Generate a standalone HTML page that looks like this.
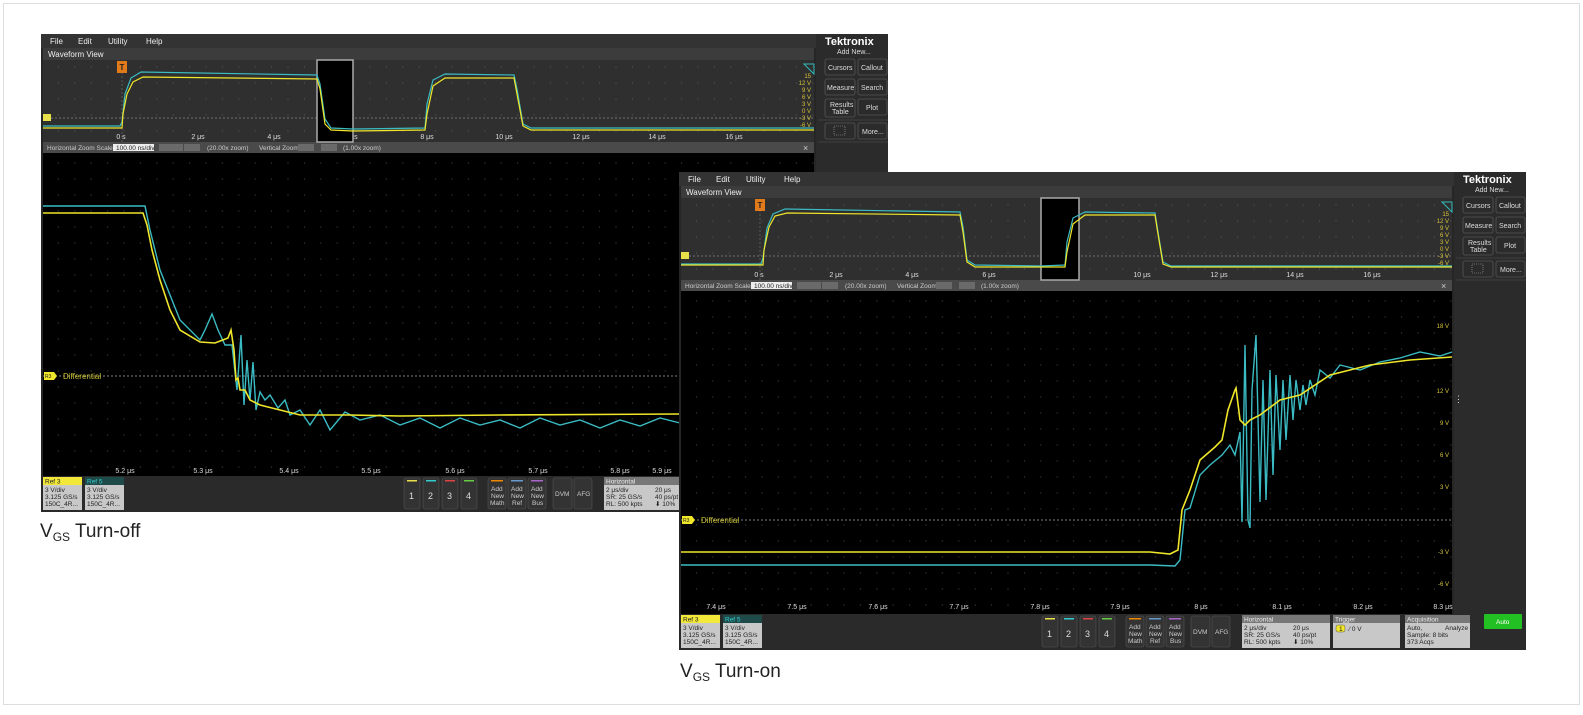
<!DOCTYPE html>
<html><head><meta charset="utf-8"><style>
html,body{margin:0;padding:0;background:#fff;}
svg{display:block;font-family:"Liberation Sans",sans-serif;}
.s{font-size:7px;fill:#ddd}
.m{font-size:8px;fill:#eee}
.y{font-size:6px;fill:#d8c23a}
.w{font-size:6.5px;fill:#ccc}
.b{font-size:6.5px;fill:#222}
</style></head><body>
<svg width="1583" height="715" viewBox="0 0 1583 715" xmlns="http://www.w3.org/2000/svg">
<defs>
<pattern id="gd" width="16.4" height="16" patternUnits="userSpaceOnUse"><circle cx="1" cy="1" r="0.6" fill="#555"/></pattern>
<pattern id="gd2" width="16.4" height="16" patternUnits="userSpaceOnUse"><circle cx="1" cy="1" r="0.6" fill="#444"/></pattern>
<g id="chrome">
  <rect x="0" y="0" width="847" height="478" fill="#262626"/>
  <rect x="0" y="0" width="847" height="14" fill="#333"/>
  <text class="m" x="9" y="10">File</text><text class="m" x="37" y="10">Edit</text><text class="m" x="67" y="10">Utility</text><text class="m" x="105" y="10">Help</text>
  <rect x="2" y="14" width="771" height="12" fill="#3c3c3c"/>
  <text class="m" x="7" y="23">Waveform View</text>
  <rect x="2" y="26" width="771" height="82" fill="#2f2f2f"/>
  <rect x="2" y="26" width="771" height="82" fill="url(#gd)"/>
  <line x1="2" y1="84" x2="773" y2="84" stroke="#888" stroke-width="0.7" stroke-dasharray="2,2"/>
  <line x1="81" y1="34" x2="81" y2="108" stroke="#777" stroke-width="0.6" stroke-dasharray="2,2"/>
  <rect x="76" y="27" width="10" height="12" fill="#e07a1a"/><text x="78.5" y="36" font-size="8" fill="#222" font-weight="bold">T</text>
  <rect x="2" y="80" width="8" height="7" fill="#e8e04a"/>
  <rect x="2" y="108" width="771" height="11" fill="#4a4a4a"/>
  <text class="w" x="6" y="116">Horizontal Zoom Scale</text>
  <rect x="72" y="110" width="41" height="7" fill="#eee"/><text class="b" x="75" y="116">100.00 ns/div</text>
  <rect x="118" y="110" width="24" height="7" fill="#6a6a6a"/><rect x="143" y="110" width="0" height="0"/>
  <rect x="143" y="110" width="16" height="0"/>
  <rect x="143" y="110" width="16" height="7" fill="#6a6a6a" transform="translate(0,0)"/>
  <text class="w" x="166" y="116">(20.00x zoom)</text>
  <text class="w" x="218" y="116">Vertical Zoom</text>
  <rect x="257" y="110" width="16" height="7" fill="#6a6a6a"/><rect x="280" y="110" width="16" height="7" fill="#6a6a6a"/>
  <text class="w" x="302" y="116">(1.00x zoom)</text>
  <text x="762" y="117" font-size="9" fill="#ccc">×</text>
  <rect x="2" y="119" width="771" height="323" fill="#000"/>
  <rect x="2" y="119" width="771" height="323" fill="url(#gd2)"/>
  <rect x="0" y="442" width="775" height="36" fill="#2a2a2a"/>
  <rect x="2" y="443" width="39" height="33" fill="#c8c8c8"/><rect x="2" y="443" width="39" height="8" fill="#f2e83a"/>
  <text class="b" x="4" y="449.5">Ref 3</text><text class="b" x="4" y="458">3 V/div</text><text class="b" x="4" y="465">3.125 GS/s</text><text class="b" x="4" y="472">150C_4R...</text>
  <rect x="44" y="443" width="39" height="33" fill="#c8c8c8"/><rect x="44" y="443" width="39" height="8" fill="#1f4a4a"/>
  <text x="46" y="449.5" font-size="6.5" fill="#3cc">Ref 5</text><text class="b" x="46" y="458">3 V/div</text><text class="b" x="46" y="465">3.125 GS/s</text><text class="b" x="46" y="472">150C_4R...</text>
  <g fill="#333" stroke="#555" stroke-width="0.6">
   <rect x="363" y="444" width="16" height="31" rx="2"/><rect x="382" y="444" width="16" height="31" rx="2"/><rect x="401" y="444" width="16" height="31" rx="2"/><rect x="420" y="444" width="16" height="31" rx="2"/>
   <rect x="447" y="444" width="18" height="31" rx="2"/><rect x="467" y="444" width="18" height="31" rx="2"/><rect x="487" y="444" width="18" height="31" rx="2"/>
   <rect x="512" y="444" width="19" height="31" rx="2"/><rect x="533" y="444" width="18" height="31" rx="2"/>
  </g>
  <rect x="366" y="446" width="10" height="1.5" fill="#e8e04a"/><rect x="385" y="446" width="10" height="1.5" fill="#3cc"/><rect x="404" y="446" width="10" height="1.5" fill="#d44"/><rect x="423" y="446" width="10" height="1.5" fill="#6c4"/>
  <rect x="450" y="446" width="12" height="1.5" fill="#e80"/><rect x="470" y="446" width="12" height="1.5" fill="#69c"/><rect x="490" y="446" width="12" height="1.5" fill="#a6c"/>
  <g font-size="9" fill="#ddd"><text x="368" y="465">1</text><text x="387" y="465">2</text><text x="406" y="465">3</text><text x="425" y="465">4</text></g>
  <g class="w"><text x="450" y="457">Add</text><text x="450" y="464">New</text><text x="449" y="471">Math</text>
  <text x="470" y="457">Add</text><text x="470" y="464">New</text><text x="471" y="471">Ref</text>
  <text x="490" y="457">Add</text><text x="490" y="464">New</text><text x="491" y="471">Bus</text>
  <text x="514" y="462">DVM</text><text x="536" y="462">AFG</text></g>
  <rect x="563" y="443" width="88" height="33" fill="#c8c8c8"/><rect x="563" y="443" width="88" height="8" fill="#777"/>
  <text x="565" y="449.5" font-size="6.5" fill="#eee">Horizontal</text>
  <text class="b" x="565" y="458">2 μs/div</text><text class="b" x="614" y="458">20 μs</text>
  <text class="b" x="565" y="465">SR: 25 GS/s</text><text class="b" x="614" y="465">40 ps/pt</text>
  <text class="b" x="565" y="472">RL: 500 kpts</text><text class="b" x="614" y="472">⬇ 10%</text>
  <rect x="775" y="0" width="72" height="478" fill="#2b2b2b"/>
  <text x="784" y="11" font-size="11" font-weight="bold" fill="#fff">Tektronix</text>
  <text x="796" y="20" font-size="7" fill="#ddd">Add New...</text>
  <g fill="#2b2b2b" stroke="#555" stroke-width="0.8">
   <rect x="784" y="25" width="30" height="16" rx="2"/><rect x="817" y="25" width="29" height="16" rx="2"/>
   <rect x="784" y="45" width="30" height="16" rx="2"/><rect x="817" y="45" width="29" height="16" rx="2"/>
   <rect x="784" y="65" width="30" height="18" rx="2"/><rect x="817" y="65" width="29" height="16" rx="2"/>
   <rect x="784" y="89" width="30" height="16" rx="2"/><rect x="817" y="89" width="29" height="16" rx="2"/>
  </g>
  <line x1="777" y1="86" x2="847" y2="86" stroke="#555" stroke-width="0.6"/><line x1="777" y1="108" x2="847" y2="108" stroke="#555" stroke-width="0.6"/>
  <g font-size="7" fill="#ddd"><text x="787" y="36">Cursors</text><text x="820" y="36">Callout</text>
  <text x="786" y="56">Measure</text><text x="820" y="56">Search</text>
  <text x="789" y="73">Results</text><text x="791" y="80">Table</text><text x="825" y="76">Plot</text>
  <text x="821" y="100">More...</text></g>
  <rect x="793" y="92" width="11" height="9" fill="none" stroke="#aaa" stroke-width="0.6" stroke-dasharray="1,1"/>
  <path d="M763 30 h10 v10 z" fill="none" stroke="#3bb" stroke-width="1"/>
  <g class="y" text-anchor="end"><text x="770" y="44">15</text><text x="770" y="51">12 V</text><text x="770" y="58">9 V</text><text x="770" y="65">6 V</text><text x="770" y="72">3 V</text><text x="770" y="79">0 V</text><text x="770" y="86">-3 V</text><text x="770" y="93">-6 V</text></g>
  <g class="s" font-size="6" text-anchor="middle"><text x="80" y="105">0 s</text><text x="157" y="105">2 μs</text><text x="233" y="105">4 μs</text><text x="310" y="105">6 μs</text><text x="386" y="105">8 μs</text><text x="463" y="105">10 μs</text><text x="540" y="105">12 μs</text><text x="616" y="105">14 μs</text><text x="693" y="105">16 μs</text></g>
</g>
</defs>
<rect x="3.5" y="3.5" width="1576" height="701" fill="#fff" stroke="#ddd"/>

<!-- LEFT SCOPE -->
<g transform="translate(41,34)">
 <use href="#chrome"/>
 <rect x="276" y="26" width="36" height="82" fill="#000" stroke="#aaa" stroke-width="1.5"/>
 <polyline fill="none" stroke="#3bbcc4" stroke-width="1.2" points="2,92 79,92 81,88 84,60 90,44 100,38 276,41 279,50 284,85 290,94 312,95 384,94 386,70 392,46 404,40 473,41 476,55 482,90 490,94 773,94"/>
 <polyline fill="none" stroke="#f0e62a" stroke-width="1.2" points="2,94 81,94 82,80 86,60 92,48 102,43 276,45 279,55 284,90 290,96 312,97 384,96 386,80 392,52 404,44 473,44 476,60 482,92 490,96 773,96"/>
 <g class="s" font-size="6" text-anchor="middle"><text x="84" y="439">5.2 μs</text><text x="162" y="439">5.3 μs</text><text x="248" y="439">5.4 μs</text><text x="330" y="439">5.5 μs</text><text x="414" y="439">5.6 μs</text><text x="497" y="439">5.7 μs</text><text x="579" y="439">5.8 μs</text><text x="621" y="439">5.9 μs</text></g>
 <line x1="2" y1="342" x2="773" y2="342" stroke="#aaa" stroke-width="0.7" stroke-dasharray="2,2"/>
 <path d="M3 338 h10 l3 4 l-3 4 h-10 z" fill="#f0e62a"/><text x="4" y="344" font-size="5" fill="#222">R3</text>
 <text x="22" y="345" font-size="8" fill="#c8c030">Differential</text>
</g>
<polyline fill="none" stroke="#3bbcc4" stroke-width="1.4" points="43,206 145,206 150,230 160,270 180,320 200,340 205,330 212,314 218,330 225,345 232,345 237,390 241,335 244,405 247,360 250,400 253,362 256,410 260,392 265,400 270,395 278,408 285,400 290,415 300,410 310,425 320,410 330,430 345,412 360,420 380,415 400,425 420,418 440,428 460,418 480,425 500,420 520,428 540,418 560,425 580,420 600,428 620,420 640,426 660,418 680,423"/>
<polyline fill="none" stroke="#f0e62a" stroke-width="1.6" points="43,213 143,213 147,225 152,250 160,280 170,310 180,330 200,342 215,343 228,338 231,330 234,350 236,380 238,378 240,390 245,390 250,400 260,405 280,410 300,415 350,415 400,416 500,415 680,414"/>

<!-- RIGHT SCOPE -->
<g transform="translate(679,172)">
 <use href="#chrome"/>
 <rect x="362" y="26" width="38" height="82" fill="#000" stroke="#aaa" stroke-width="1.5"/>
 <polyline fill="none" stroke="#3bbcc4" stroke-width="1.2" points="2,92 82,92 84,86 88,56 94,42 106,37 281,40 284,55 288,88 296,93 362,94 386,93 388,70 394,46 406,40 476,41 479,60 484,90 492,94 773,94"/>
 <polyline fill="none" stroke="#f0e62a" stroke-width="1.2" points="2,93 84,93 85,78 90,55 96,44 108,41 281,43 284,60 288,90 296,95 386,95 388,80 394,52 406,43 476,43 479,62 484,92 492,95 773,95"/>
 <g class="s" font-size="6" text-anchor="middle"><text x="37" y="437">7.4 μs</text><text x="118" y="437">7.5 μs</text><text x="199" y="437">7.6 μs</text><text x="280" y="437">7.7 μs</text><text x="361" y="437">7.8 μs</text><text x="441" y="437">7.9 μs</text><text x="522" y="437">8 μs</text><text x="603" y="437">8.1 μs</text><text x="684" y="437">8.2 μs</text><text x="764" y="437">8.3 μs</text></g>
 <g class="y" text-anchor="end"><text x="770" y="156">18 V</text><text x="770" y="221">12 V</text><text x="770" y="253">9 V</text><text x="770" y="285">6 V</text><text x="770" y="317">3 V</text><text x="770" y="382">-3 V</text><text x="770" y="414">-6 V</text></g>
 <line x1="2" y1="348" x2="773" y2="348" stroke="#aaa" stroke-width="0.7" stroke-dasharray="2,2"/>
 <path d="M3 344 h10 l3 4 l-3 4 h-10 z" fill="#f0e62a"/><text x="4" y="350" font-size="5" fill="#222">R3</text>
 <text x="22" y="351" font-size="8" fill="#c8c030">Differential</text>
 <text x="775" y="230" font-size="9" fill="#ddd">⋮</text>
 <!-- trigger / acquisition / auto -->
 <rect x="654" y="443" width="67" height="33" fill="#c8c8c8"/><rect x="654" y="443" width="67" height="8" fill="#777"/>
 <text x="656" y="449.5" font-size="6.5" fill="#eee">Trigger</text>
 <rect x="657" y="453" width="9" height="7" rx="2" fill="#f0e62a" stroke="#555" stroke-width="0.5"/><text class="b" x="660" y="459">1</text><text class="b" x="670" y="459">⁄  0 V</text>
 <rect x="726" y="443" width="65" height="33" fill="#c8c8c8"/><rect x="726" y="443" width="65" height="8" fill="#777"/>
 <text x="728" y="449.5" font-size="6.5" fill="#eee">Acquisition</text>
 <text class="b" x="728" y="458">Auto,</text><text class="b" x="766" y="458">Analyze</text><text class="b" x="728" y="465">Sample: 8 bits</text><text class="b" x="728" y="472">373 Acqs</text>
 <rect x="805" y="442" width="38" height="15" rx="1" fill="#22c022"/><text x="817" y="452" font-size="6.5" fill="#fff">Auto</text>
</g>
<polyline fill="none" stroke="#3bbcc4" stroke-width="1.4" points="681,565 1150,565 1175,566 1180,560 1185,510 1190,508 1200,475 1210,465 1222,455 1230,445 1235,455 1240,432 1242,522 1245,345 1248,520 1250,528 1252,390 1256,335 1260,502 1263,380 1266,500 1270,370 1273,475 1276,375 1280,450 1283,380 1286,440 1290,375 1293,420 1296,380 1300,410 1303,385 1306,405 1310,380 1315,395 1320,370 1330,378 1340,365 1360,370 1380,362 1400,358 1420,352 1440,356 1452,352"/>
<polyline fill="none" stroke="#f0e62a" stroke-width="1.6" points="681,552 1150,552 1170,554 1178,550 1182,510 1190,490 1200,460 1215,447 1222,440 1228,410 1235,390 1236,388 1240,420 1245,425 1250,420 1260,415 1280,400 1300,395 1330,375 1370,365 1410,360 1452,357"/>

<text x="40" y="537" font-size="19" fill="#222">V<tspan font-size="12" dy="4">GS</tspan><tspan dy="-4"> Turn-off</tspan></text>
<text x="680" y="677" font-size="19" fill="#222">V<tspan font-size="12" dy="4">GS</tspan><tspan dy="-4"> Turn-on</tspan></text>
</svg>
</body></html>
